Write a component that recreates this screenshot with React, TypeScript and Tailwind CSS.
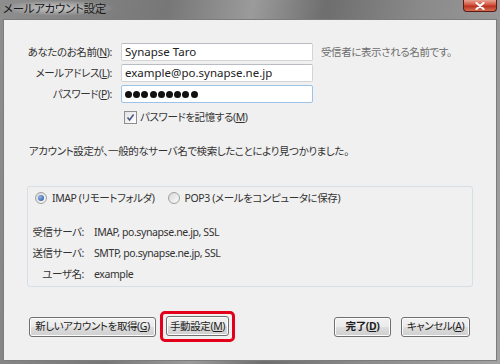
import React from 'react';

const jp = "font-['Noto_Sans','Noto_Sans_CJK_JP',sans-serif] [font-feature-settings:'palt']";

function Key({ k }: { k: string }) {
  return (
    <>
      (<span className="underline underline-offset-1">{k}</span>)
    </>
  );
}

function WinButton({ children, bold = false, width }: { children: React.ReactNode; bold?: boolean; width: string }) {
  return (
    <button
      className={`${width} h-[20px] rounded-[3px] border border-[#707070] bg-[linear-gradient(#f2f2f2_0%,#ebebeb_48%,#dddddd_52%,#cfcfcf_100%)] text-[10.5px] tracking-[-0.4px] whitespace-nowrap text-[#1e1e1e] shadow-[inset_0_0_0_1px_#fcfcfc] flex items-center justify-center leading-none ${bold ? 'font-bold' : ''}`}
    >
      {children}
    </button>
  );
}

function Field({ label, value, password = false, focused = false }: { label: React.ReactNode; value: string; password?: boolean; focused?: boolean }) {
  return (
    <div className="flex items-center h-[18px]">
      <div className="w-[109px] text-right pr-[1px] text-[#333] whitespace-nowrap">{label}</div>
      <div
        className={`ml-[8px] w-[192px] h-[18px] bg-white rounded-[2px] border flex items-center pl-[3px] ${
          focused ? 'border-[#9cc3e6]' : 'border-[#d2d4d8] border-t-[#b9bcc2]'
        }`}
      >
        {password ? (
          <div className="flex gap-[1.2px]">
            {Array.from({ length: 9 }).map((_, i) => (
              <span key={i} className="w-[7px] h-[7px] rounded-full bg-[#111]" />
            ))}
          </div>
        ) : (
          <span className="text-[11.5px] tracking-normal text-[#222] leading-none">{value}</span>
        )}
      </div>
    </div>
  );
}

function Radio({ checked }: { checked: boolean }) {
  return (
    <span className="w-[12px] h-[12px] rounded-full border border-[#a0a0a0] bg-[linear-gradient(135deg,#d8d8d8,#fbfbfb)] flex items-center justify-center">
      {checked && <span className="w-[6px] h-[6px] rounded-full bg-[radial-gradient(circle_at_35%_35%,#8fb6e8,#1f4d9a)]" />}
    </span>
  );
}

export default function App() {
  return (
    <div className={`w-[500px] h-[364px] flex flex-col text-[10.5px] tracking-[-0.4px] bg-[linear-gradient(100deg,#8e8e8e_0%,#777_30%,#9b9b9b_45%,#6e6e6e_58%,#8a8a8a_75%,#a3a3a3_100%)] ${jp}`}>
      {/* title bar */}
      <div className="h-[19px] flex items-start justify-between shrink-0">
        <div className="pl-[3px] pt-[2px] text-[11.5px] tracking-[-0.3px] text-[#1a1a1a] leading-[14px] bg-[radial-gradient(ellipse_at_center,rgba(255,255,255,0.55),rgba(255,255,255,0)_70%)] pr-[10px]">
          メールアカウント設定
        </div>
        <div className="mr-[3px] w-[34px] h-[12px] rounded-b-[4px] border border-t-0 border-[#5a1a12] bg-[linear-gradient(#e8a594_0%,#d2533f_45%,#b8321f_55%,#d86f52_100%)] flex items-center justify-center">
          <svg width="10" height="8" viewBox="0 0 10 8">
            <path d="M1.5 1 L8.5 7 M8.5 1 L1.5 7" stroke="#fff" strokeWidth="2.2" strokeLinecap="round" />
          </svg>
        </div>
      </div>

      {/* content */}
      <div className="flex-1 mx-[3px] mb-[3px] bg-[#f0f0f0] border border-[#7c7c7c] flex flex-col leading-[16px]">
        <div className="mt-[23px] flex flex-col gap-[3px]">
          <div className="flex items-center">
            <Field label={<>あなたのお名前<Key k="N" />:</>} value="Synapse Taro" />
            <span className="ml-[8px] text-[#6d6d6d]">受信者に表示される名前です。</span>
          </div>
          <Field label={<>メールアドレス<Key k="L" />:</>} value="example@po.synapse.ne.jp" />
          <Field label={<>パスワード<Key k="P" />:</>} value="" password focused />
        </div>

        <div className="mt-[6px] ml-[120px] flex items-center gap-[2px]">
          <span className="w-[13px] h-[13px] border border-[#8f8f8f] bg-[linear-gradient(135deg,#e2e2e2,#ffffff)] flex items-center justify-center">
            <svg width="9" height="9" viewBox="0 0 9 9">
              <path d="M1.5 4.5 L3.6 7 L7.6 1.5" stroke="#4a5a8a" strokeWidth="1.6" fill="none" />
            </svg>
          </span>
          <span className="text-[#333] ml-[1px]">パスワードを記憶する<Key k="M" /></span>
        </div>

        <div className="mt-[18px] ml-[25px] text-[#333]">
          アカウント設定が、一般的なサーバ名で検索したことにより見つかりました。
        </div>

        <div className="mt-[27px] mx-[23px] h-[101px] rounded-[3px] border border-[#d5dfe5] flex flex-col text-[#333]">
          <div className="mt-[4px] ml-[7px] flex items-center h-[14px]">
            <Radio checked />
            <span className="ml-[5px]">IMAP (リモートフォルダ)</span>
            <span className="ml-[13px]"><Radio checked={false} /></span>
            <span className="ml-[5px]">POP3 (メールをコンピュータに保存)</span>
          </div>
          <div className="mt-[20px] flex flex-col gap-[7px]">
            {[
              ['受信サーバ:', 'IMAP, po.synapse.ne.jp, SSL'],
              ['送信サーバ:', 'SMTP, po.synapse.ne.jp, SSL'],
              ['ユーザ名:', 'example'],
            ].map(([k, v]) => (
              <div key={k} className="flex items-center h-[14px]">
                <span className="w-[56px] text-right">{k}</span>
                <span className="ml-[10px]">{v}</span>
              </div>
            ))}
          </div>
        </div>

        <div className="mt-[24px] ml-[25px] mr-[26px] flex items-center">
          <WinButton width="w-[127px]">新しいアカウントを取得<Key k="G" /></WinButton>
          <div className="ml-[4px] px-[3px] pt-[2px] pb-[3px] border-[3px] border-[#e2001b] rounded-[5px]">
            <WinButton width="w-[63px]">手動設定<Key k="M" /></WinButton>
          </div>
          <div className="flex-1" />
          <WinButton width="w-[57px]" bold>完了<Key k="D" /></WinButton>
          <div className="ml-[10px]">
            <WinButton width="w-[69px]">キャンセル<Key k="A" /></WinButton>
          </div>
        </div>
      </div>
    </div>
  );
}
